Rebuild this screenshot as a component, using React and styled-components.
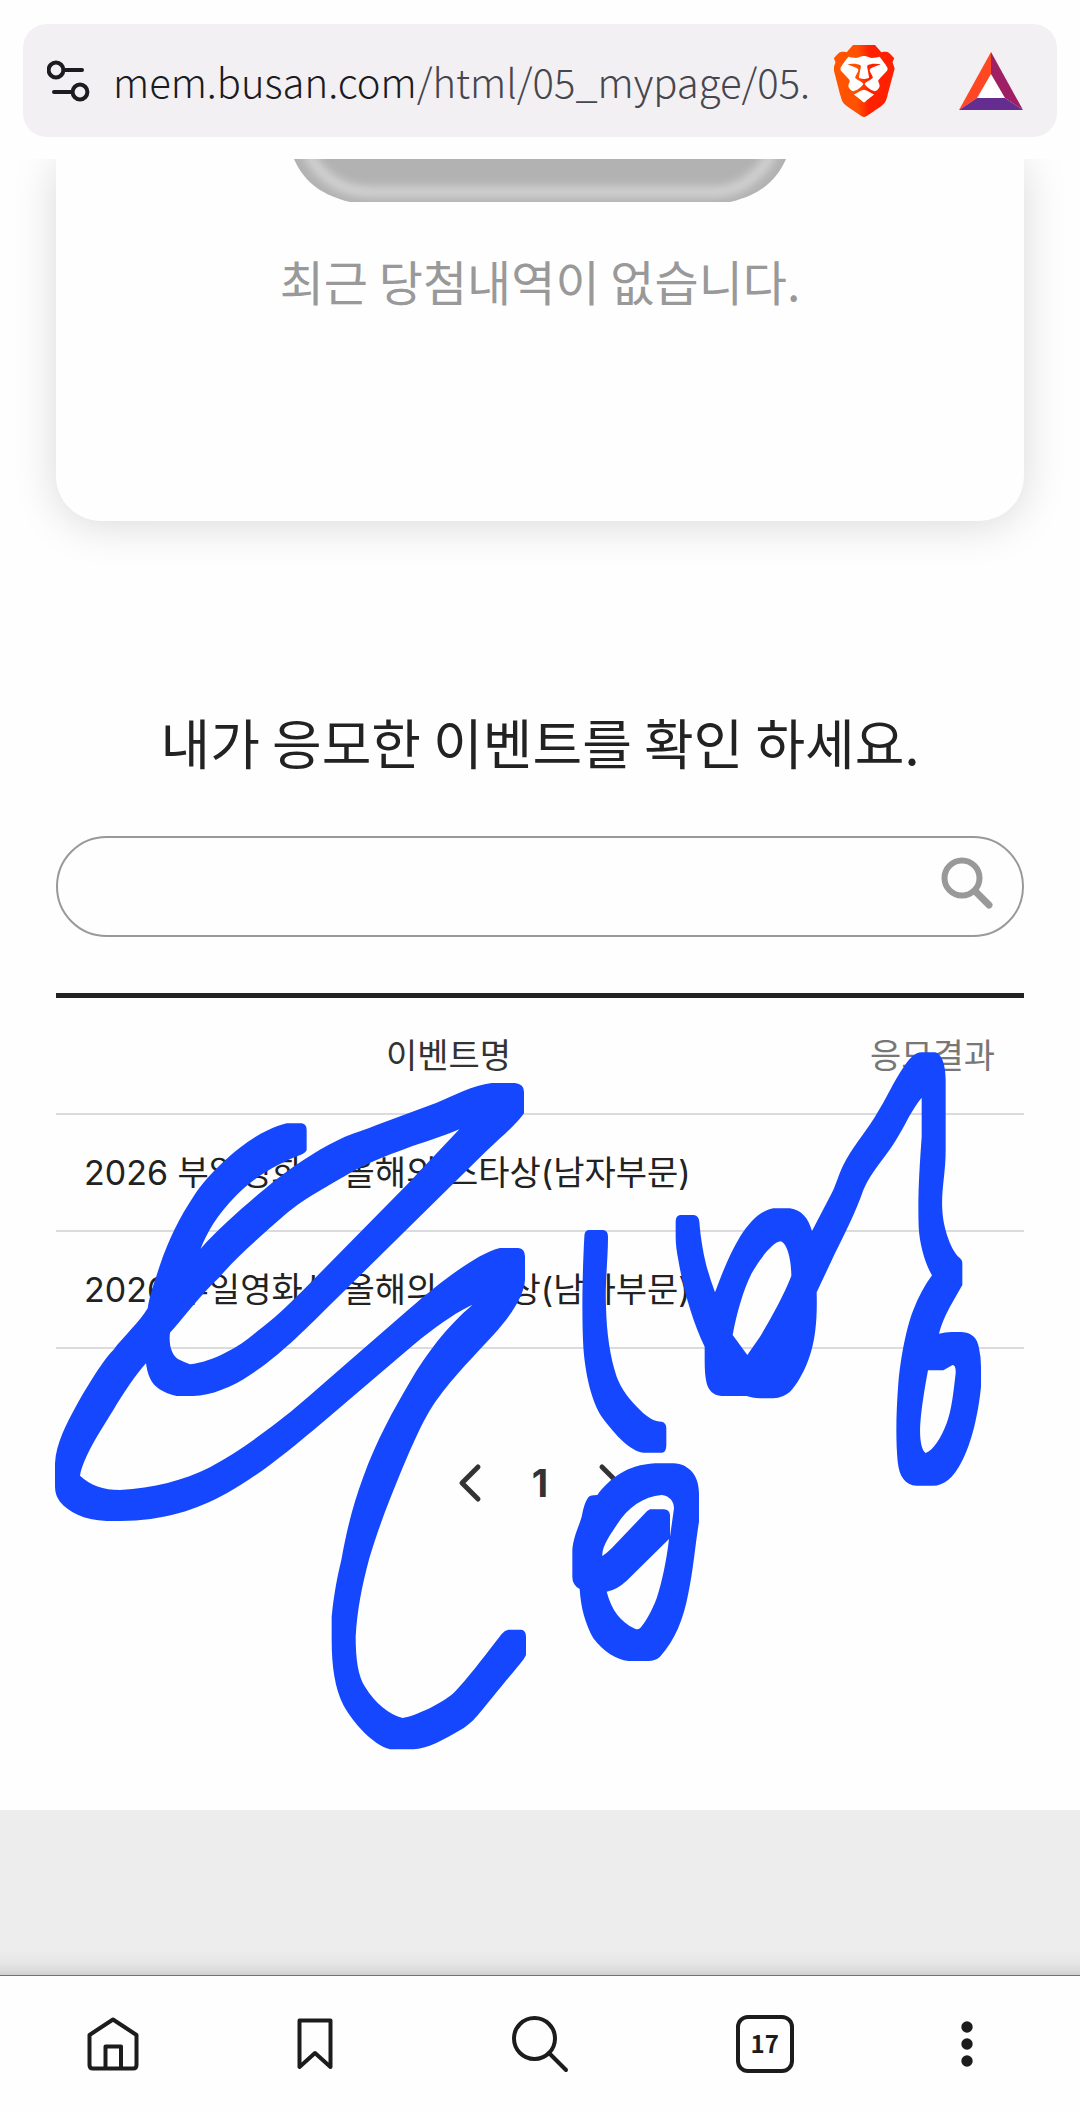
import React, { useState } from 'react';
import styled, { createGlobalStyle } from 'styled-components';
import { SiBrave } from 'react-icons/si';

const GlobalStyle = createGlobalStyle`
  * {
    box-sizing: border-box;
  }

  body {
    margin: 0;
    background: #fefefe;
    color: #222;
    font-family: Inter, 'Noto Sans CJK KR', sans-serif;
  }

  button {
    padding: 0;
    border: none;
    background: none;
    color: inherit;
    font: inherit;
    cursor: pointer;
  }

  svg {
    display: block;
  }
`;

const Page = styled.div`
  position: relative;
  overflow: hidden;
`;

const BrowserHeader = styled.header`
  position: relative;
  z-index: 1;
  padding: 24px 23px 22px;
  background: #fefefe;
`;

const AddressBar = styled.div`
  display: flex;
  align-items: center;
  height: 113px;
  padding: 0 34px 0 24px;
  border-radius: 24px;
  background: #f2f0f2;
`;

const Url = styled.a`
  flex: 1;
  min-width: 0;
  margin-left: 22px;
  color: #46464f;
  font-family: 'Noto Sans CJK KR', sans-serif;
  font-size: 40px;
  font-weight: 300;
  line-height: 60px;
  white-space: nowrap;
  text-decoration: none;

  span {
    color: #1c1b1f;
  }
`;

const ShieldButton = styled.button`
  margin-right: 64px;
`;

const WinCard = styled.section`
  display: flex;
  flex-direction: column;
  align-items: center;
  margin: 0 56px;
  padding-bottom: 206px;
  border-radius: 0 0 45px 45px;
  box-shadow: 0 4px 44px rgba(0, 0, 0, 0.15);
`;

const WinText = styled.p`
  margin: 43px 0 0;
  color: #999;
  font-family: 'Noto Sans CJK KR', sans-serif;
  font-size: 48px;
  line-height: 70px;
`;

const Events = styled.main`
  padding: 185px 56px 291px;
`;

const Title = styled.h1`
  margin: 0 0 58px;
  font-family: 'Noto Sans CJK KR', sans-serif;
  font-size: 54px;
  font-weight: 400;
  line-height: 72px;
  text-align: center;
`;

const SearchBox = styled.form`
  display: flex;
  align-items: center;
  height: 101px;
  margin-bottom: 56px;
  padding: 0 28px 0 40px;
  border: 2px solid #999;
  border-radius: 51px;

  input {
    flex: 1;
    min-width: 0;
    height: 100%;
    border: none;
    outline: none;
    background: transparent;
    font: inherit;
    font-size: 36px;
  }

  button {
    margin-bottom: 8px;
  }
`;

const EventTable = styled.table`
  width: 100%;
  border-collapse: separate;
  border-spacing: 0;
  border-top: 5px solid #222;
  font-size: 34px;

  th,
  td {
    height: 117px;
    padding: 0 0 4px;
    border-bottom: 2px solid #dbdbdd;
    font-weight: 400;
  }

  th {
    color: #333;
  }

  th:last-child {
    width: 183px;
    color: #777;
  }

  td:first-child {
    padding-left: 28px;
  }
`;

const Pagination = styled.nav`
  display: flex;
  justify-content: center;
  align-items: center;
  margin-top: 98px;
`;

const PageButton = styled.button`
  display: flex;
  justify-content: center;
  align-items: center;
  width: 70px;
  height: 72px;
  color: #333;
  font-size: 38px;
  font-weight: 700;
`;

const PageFooter = styled.footer`
  height: 165px;
  background: linear-gradient(to top, #ced0cf 0, #dcdcdc 5px, #e7e7e7 13px, #eaeaea 20px, #ededed 24px);
`;

const BottomBar = styled.nav`
  display: grid;
  grid-template-columns: 9fr 9fr 11fr 9fr 9fr;
  height: 136px;
  padding: 0 12px;
  border-top: 1px solid #6f7271;
  background: #fefefe;
`;

const BarButton = styled.button`
  display: flex;
  justify-content: center;
  align-items: center;
  color: #1c1c1c;
`;

const TabCount = styled.span`
  width: 58px;
  height: 58px;
  border: 4px solid #1c1c1c;
  border-radius: 12px;
  font-family: 'Noto Sans CJK KR', sans-serif;
  font-size: 24px;
  font-weight: 700;
  line-height: 48px;
  text-align: center;
`;

const Scribble = styled.svg`
  position: absolute;
  top: 0;
  left: 0;
  width: 100%;
  fill: #1547ff;
  fill-rule: evenodd;
  pointer-events: none;
`;

const events = [
  { id: 1, name: '2026 부일영화상 올해의 스타상(남자부문)', result: '' },
  { id: 2, name: '2026 부일영화상 올해의 스타상(남자부문)', result: '' },
];

const SiteSettingsIcon = () => (
  <svg width="44" height="44" viewBox="0 0 44 44" fill="none" stroke="#1c1b1f" strokeWidth="4" strokeLinecap="round">
    <circle cx="9" cy="11" r="7.4" />
    <path d="M18 11H35" />
    <circle cx="33" cy="33" r="7.4" />
    <path d="M7 33H24" />
  </svg>
);

const BraveIcon = () => (
  <svg width="61" height="72" viewBox="0 0 61 72">
    <defs>
      <linearGradient id="brave" x1="0" x2="1">
        <stop offset="0" stopColor="#ff5500" />
        <stop offset="0.4" stopColor="#ff5000" />
        <stop offset="0.58" stopColor="#ff2000" />
        <stop offset="1" stopColor="#ff2000" />
      </linearGradient>
    </defs>
    <path d="M10 14 30 9 51 14 54 26 47 48 30 60 14 48 7 26Z" fill="#fff" />
    <SiBrave x="-6" y="0" size={72} style={{ fill: 'url(#brave)' }} />
  </svg>
);

const BatIcon = () => (
  <svg width="64" height="58" viewBox="0 0 64 58">
    <path d="M32 20 19 46H46Z" fill="#fff" />
    <path d="M32 0V22L18 46 0 58Z" fill="#ff4724" />
    <path d="M32 0V22L46 46 64 58Z" fill="#9e1f63" />
    <path d="M18 46H46L64 58H0Z" fill="#662d91" />
  </svg>
);

// Borda inferior da caixa cinza
const BoxImage = () => (
  <svg width="492" height="43" viewBox="0 0 492 43">
    <defs>
      <clipPath id="box">
        <path d="M0 0C8 18 22 35 56 43H436C470 35 484 18 492 0Z" />
      </clipPath>
      <filter id="soft" x="-10%" y="-50%" width="120%" height="200%">
        <feGaussianBlur stdDeviation="4" />
      </filter>
    </defs>
    <g clipPath="url(#box)">
      <rect width="492" height="43" fill="#b2b2b2" />
      <path
        d="M14 -6C26 18 48 33 76 33H420C444 33 466 18 478 -6"
        fill="none"
        stroke="#d2d2d2"
        strokeWidth="11"
        filter="url(#soft)"
      />
    </g>
  </svg>
);

const Chevron = ({ d }) => (
  <svg width="24" height="40" viewBox="0 0 24 40" fill="none" stroke="#333" strokeWidth="5" strokeLinecap="round" strokeLinejoin="round">
    <path d={d} />
  </svg>
);

const HandDrawing = () => (
  <Scribble viewBox="0 0 1080 2111" aria-hidden="true">
    <g transform="translate(40 1060) scale(.33333)">
      <path
        d="M740 190H785Q800 192 800 210V270Q797 278 788 282C720 308 650 345 590 405C530 465 500 520 482 566C540 500 640 415 700 365C780 302 850 260 915 230C950 216 980 208 1010 195L1190 128C1240 108 1300 75 1355 69H1425Q1452 72 1452 95V160C1430 192 1390 225 1340 272L1180 430 860 745C760 845 700 900 630 945C580 980 510 1008 460 1008H410C370 1000 340 980 330 955C323 940 320 925 318 910C290 940 250 1000 220 1050C180 1115 130 1190 120 1247C150 1275 190 1290 240 1290C340 1285 430 1262 510 1222C640 1150 750 1060 860 962L1110 745C1190 675 1310 580 1380 564H1435Q1455 566 1455 590V660C1452 710 1410 770 1360 825C1310 880 1240 950 1190 1020C1150 1075 1110 1170 1075 1255C1040 1340 1010 1420 988 1495C965 1580 952 1650 947 1730C947 1800 955 1850 975 1880C1005 1930 1050 1965 1088 1974C1120 1970 1200 1935 1240 1900C1280 1860 1340 1780 1385 1722Q1395 1710 1405 1709H1445Q1458 1712 1458 1730V1785C1450 1805 1410 1845 1355 1915C1310 1970 1300 1985 1270 2005C1210 2040 1160 2068 1120 2068H1050C1000 2055 940 1990 910 1935C885 1885 875 1820 875 1740V1670C882 1600 892 1550 904 1500C920 1410 940 1330 970 1250C1010 1140 1060 1050 1110 965C1160 880 1220 800 1297 735C1250 755 1180 805 1120 855L850 1085C740 1178 650 1250 560 1300C470 1350 370 1383 240 1383H200C130 1380 85 1355 60 1325Q45 1305 45 1280V1210C48 1150 80 1090 110 1035C150 965 190 900 220 870C250 830 300 785 323 745C328 710 345 660 360 615C385 540 420 470 460 410C520 320 620 240 680 212Q715 196 740 190Z
          M1258 208C1200 232 1140 250 1100 265C1030 290 970 315 920 345C850 385 780 425 740 460C660 530 590 590 540 650C480 705 430 775 390 818C385 860 398 888 415 898Q435 908 450 913C520 905 600 860 650 815C700 778 740 740 790 690L1100 375Z"
      />
    </g>
    <g transform="translate(560 1040) scale(.33333)">
      <path d="M85 570H130Q144 572 144 590C144 660 135 720 138 800C140 880 150 950 170 1010C185 1050 210 1080 240 1110C265 1135 285 1145 305 1145Q319 1148 319 1165V1215Q319 1238 305 1238H250C210 1232 170 1190 125 1130C95 1085 75 1000 70 920C65 830 67 700 73 590Q73 572 85 570Z" />
      <path
        d="M360 525H402Q417 528 418 545C425 630 440 690 465 757C490 690 510 640 540 590C570 545 600 512 640 505H690C725 510 745 535 756 573L815 460C830 430 835 405 850 375C875 325 910 285 945 230C980 175 1000 125 1035 75C1050 55 1065 37 1085 37H1125C1145 40 1157 75 1157 120V330C1157 400 1143 450 1147 510C1150 570 1175 630 1195 650Q1207 658 1207 670V735Q1190 765 1170 800C1155 828 1145 850 1137 881Q1155 876 1175 876H1205C1235 877 1253 895 1257 925Q1263 950 1263 980V1040C1255 1120 1235 1210 1205 1265C1180 1315 1150 1337 1120 1337H1070C1035 1335 1018 1310 1013 1265C1007 1200 1008 1120 1015 1030C1022 950 1040 860 1060 810C1075 770 1095 735 1116 706C1095 670 1078 610 1076 560C1073 470 1078 390 1085 290V173C1055 210 1040 245 1020 280C985 345 935 390 910 450C890 510 850 590 825 640L770 757C772 830 768 900 745 960C730 1000 710 1035 690 1055Q670 1073 640 1075H600Q575 1073 560 1068H485Q445 1065 438 1020Q434 1000 434 960V920C400 850 370 750 355 660Q347 620 347 590V545Q347 527 360 525Z
          M662 604C682 610 694 660 694 708C670 770 630 840 600 890L562 945 518 885C530 820 550 750 575 700C600 655 640 605 662 604Z
          M1104 991H1150L1178 975Q1188 975 1187 1000C1180 1060 1175 1110 1160 1150C1145 1190 1120 1232 1097 1239C1083 1230 1078 1190 1081 1150C1085 1100 1093 1050 1104 991Z"
      />
    </g>
    <g transform="translate(310 1340) scale(.33333)">
      <path
        d="M1035 370H1090C1140 372 1167 410 1167 460V545C1155 620 1150 690 1135 760C1120 840 1095 900 1050 950Q1035 963 1015 963H955C920 960 880 935 850 895C825 850 812 800 809 747Q787 735 787 710V630C790 590 805 565 815 530Q822 490 835 472Q840 465 862 465C900 415 950 375 1035 370Z
          M1055 465C1080 468 1092 485 1092 505L1080 590V525Q1078 509 1062 508H1020Q1010 512 1000 525L905 625Q890 640 877 648C875 620 900 585 920 555C955 500 1000 470 1055 465Z
          M1077 597C1070 660 1055 730 1040 775C1025 815 1005 850 990 865Q983 870 975 866C930 845 905 810 890 755Q920 750 950 722Z"
      />
    </g>
  </Scribble>
);

function App() {
  const [busca, setBusca] = useState('');

  return (
    <Page>
      <GlobalStyle />
      <BrowserHeader>
        <AddressBar>
          <button type="button" aria-label="사이트 정보">
            <SiteSettingsIcon />
          </button>
          <Url href="#">
            <span>mem.busan.com</span>/html/05_mypage/05.
          </Url>
          <ShieldButton type="button" aria-label="Brave Shields">
            <BraveIcon />
          </ShieldButton>
          <button type="button" aria-label="Brave Rewards">
            <BatIcon />
          </button>
        </AddressBar>
      </BrowserHeader>

      <WinCard>
        <BoxImage />
        <WinText>최근 당첨내역이 없습니다.</WinText>
      </WinCard>

      <Events>
        <Title>내가 응모한 이벤트를 확인 하세요.</Title>
        <SearchBox onSubmit={(e) => e.preventDefault()}>
          <input type="text" aria-label="이벤트 검색" value={busca} onChange={(e) => setBusca(e.target.value)} />
          <button type="submit" aria-label="검색">
            <svg width="54" height="54" viewBox="0 0 54 54" fill="none" stroke="#999" strokeWidth="6">
              <circle cx="22" cy="22" r="17.5" />
              <path d="M35 35 49 49" strokeWidth="7" strokeLinecap="round" />
            </svg>
          </button>
        </SearchBox>

        <EventTable>
          <thead>
            <tr>
              <th scope="col">이벤트명</th>
              <th scope="col">응모결과</th>
            </tr>
          </thead>
          <tbody>
            {events.map((event) => (
              <tr key={event.id}>
                <td>{event.name}</td>
                <td>{event.result}</td>
              </tr>
            ))}
          </tbody>
        </EventTable>

        <Pagination aria-label="페이지">
          <PageButton type="button" aria-label="이전">
            <Chevron d="M20 4 4 20 20 36" />
          </PageButton>
          <PageButton type="button">1</PageButton>
          <PageButton type="button" aria-label="다음">
            <Chevron d="M4 4 20 20 4 36" />
          </PageButton>
        </Pagination>
      </Events>

      <PageFooter />

      <BottomBar>
        <BarButton type="button" aria-label="홈">
          <svg width="52" height="54" viewBox="0 0 52 54" fill="none" stroke="currentColor" strokeWidth="4" strokeLinejoin="round">
            <path d="M2.5 18 26 2.5 49.5 18V48Q49.5 51.5 46 51.5H6Q2.5 51.5 2.5 48Z" />
            <path d="M18.5 51V29.5H34V51" />
          </svg>
        </BarButton>
        <BarButton type="button" aria-label="북마크">
          <svg width="36" height="52" viewBox="0 0 36 52" fill="none" stroke="currentColor" strokeWidth="4" strokeLinejoin="round">
            <path d="M2.5 2.5H33.5V49L18 35 2.5 49Z" />
          </svg>
        </BarButton>
        <BarButton type="button" aria-label="검색">
          <svg width="58" height="58" viewBox="0 0 58 58" fill="none" stroke="currentColor" strokeWidth="4" strokeLinecap="round">
            <circle cx="23.5" cy="23.5" r="20.5" />
            <path d="M38 38 55 55" />
          </svg>
        </BarButton>
        <BarButton type="button" aria-label="탭">
          <TabCount>17</TabCount>
        </BarButton>
        <BarButton type="button" aria-label="메뉴">
          <svg width="12" height="46" viewBox="0 0 12 46" fill="currentColor">
            <circle cx="6" cy="6" r="5.7" />
            <circle cx="6" cy="23" r="5.7" />
            <circle cx="6" cy="40" r="5.7" />
          </svg>
        </BarButton>
      </BottomBar>

      <HandDrawing />
    </Page>
  );
}

export default App;
